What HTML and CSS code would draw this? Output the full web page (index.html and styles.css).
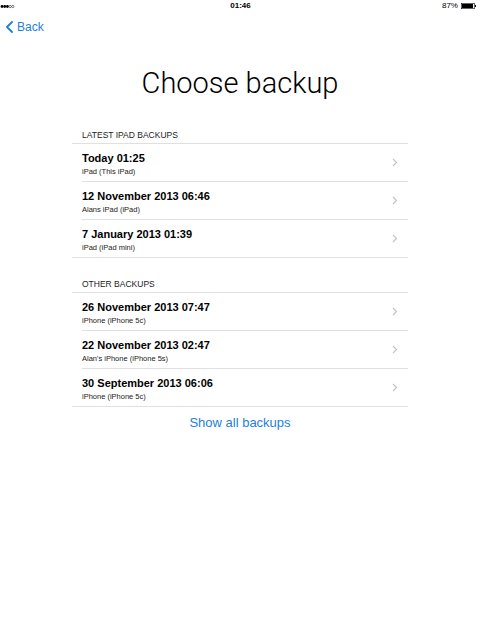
FILE: index.html
```html
<!DOCTYPE html>
<html lang="en">
<head>
    <meta charset="UTF-8">
    <meta name="viewport" content="width=device-width, initial-scale=1.0">
    <title>Choose backup</title>
    <link rel="stylesheet" href="styles.css">
</head>
<body>
    <div class="status-bar">
        <svg class="signal" width="15" height="5" viewBox="0 0 15 5">
            <circle cx="2" cy="2.5" r="1.4" fill="#000"/>
            <circle cx="4.7" cy="2.5" r="1.4" fill="#000"/>
            <circle cx="7.4" cy="2.5" r="1.4" fill="#000"/>
            <circle cx="10.1" cy="2.5" r="1.15" fill="none" stroke="#000" stroke-width="0.5"/>
            <circle cx="12.8" cy="2.5" r="1.15" fill="none" stroke="#000" stroke-width="0.5"/>
        </svg>
        <span class="clock">01:46</span>
        <span class="battery">
            87%
            <svg width="16" height="6" viewBox="0 0 16 6">
                <rect x="0.3" y="0.3" width="13" height="5.4" fill="none" stroke="#000" stroke-width="0.6"/>
                <rect x="1" y="1" width="11" height="4" fill="#000"/>
                <rect x="14" y="2" width="1" height="2" fill="#000"/>
            </svg>
        </span>
    </div>

    <nav class="nav-bar">
        <a class="back-link" href="#">
            <svg width="9" height="12" viewBox="0 0 9 12">
                <path d="M7 1 L2 6 L7 11" fill="none" stroke="#1e7fd9" stroke-width="1.8" stroke-linecap="round" stroke-linejoin="round"/>
            </svg>
            Back
        </a>
    </nav>

    <main class="content">
        <h1 class="title">Choose backup</h1>

        <section class="backup-group">
            <h2 class="group-header">LATEST IPAD BACKUPS</h2>
            <ul class="backup-list">
                <li class="backup-row">
                    <div class="row-inner">
                        <div class="row-text">
                            <div class="row-title">Today 01:25</div>
                            <div class="row-sub">iPad (This iPad)</div>
                        </div>
                        <svg class="chevron" width="6" height="9" viewBox="0 0 6 9"><path d="M1 1 L4.5 4.5 L1 8" fill="none" stroke="#c4c4c8" stroke-width="1.2"/></svg>
                    </div>
                </li>
                <li class="backup-row">
                    <div class="row-inner">
                        <div class="row-text">
                            <div class="row-title">12 November 2013 06:46</div>
                            <div class="row-sub">Alans iPad (iPad)</div>
                        </div>
                        <svg class="chevron" width="6" height="9" viewBox="0 0 6 9"><path d="M1 1 L4.5 4.5 L1 8" fill="none" stroke="#c4c4c8" stroke-width="1.2"/></svg>
                    </div>
                </li>
                <li class="backup-row">
                    <div class="row-inner">
                        <div class="row-text">
                            <div class="row-title">7 January 2013 01:39</div>
                            <div class="row-sub">iPad (iPad mini)</div>
                        </div>
                        <svg class="chevron" width="6" height="9" viewBox="0 0 6 9"><path d="M1 1 L4.5 4.5 L1 8" fill="none" stroke="#c4c4c8" stroke-width="1.2"/></svg>
                    </div>
                </li>
            </ul>
        </section>

        <section class="backup-group">
            <h2 class="group-header">OTHER BACKUPS</h2>
            <ul class="backup-list">
                <li class="backup-row">
                    <div class="row-inner">
                        <div class="row-text">
                            <div class="row-title">26 November 2013 07:47</div>
                            <div class="row-sub">iPhone (iPhone 5c)</div>
                        </div>
                        <svg class="chevron" width="6" height="9" viewBox="0 0 6 9"><path d="M1 1 L4.5 4.5 L1 8" fill="none" stroke="#c4c4c8" stroke-width="1.2"/></svg>
                    </div>
                </li>
                <li class="backup-row">
                    <div class="row-inner">
                        <div class="row-text">
                            <div class="row-title">22 November 2013 02:47</div>
                            <div class="row-sub">Alan's iPhone (iPhone 5s)</div>
                        </div>
                        <svg class="chevron" width="6" height="9" viewBox="0 0 6 9"><path d="M1 1 L4.5 4.5 L1 8" fill="none" stroke="#c4c4c8" stroke-width="1.2"/></svg>
                    </div>
                </li>
                <li class="backup-row">
                    <div class="row-inner">
                        <div class="row-text">
                            <div class="row-title">30 September 2013 06:06</div>
                            <div class="row-sub">iPhone (iPhone 5c)</div>
                        </div>
                        <svg class="chevron" width="6" height="9" viewBox="0 0 6 9"><path d="M1 1 L4.5 4.5 L1 8" fill="none" stroke="#c4c4c8" stroke-width="1.2"/></svg>
                    </div>
                </li>
            </ul>
        </section>

        <a class="show-all" href="#">Show all backups</a>
    </main>
</body>
</html>
```

FILE: styles.css
```css
:root {
    --ios-blue: #1e7fd9;
    --separator: #e0e0e0;
    --text-color: #000000;
}

*, *::before, *::after {
    box-sizing: border-box;
}

body {
    margin: 0;
    background: #ffffff;
    color: var(--text-color);
    font-family: "Liberation Sans", Arial, sans-serif;
}

/* ----- Status bar ----- */
.status-bar {
    height: 12px;
    padding: 0 3px 0 0;
    display: flex;
    justify-content: space-between;
    align-items: center;
    font-size: 8px;
    line-height: 12px;
}

.clock {
    font-weight: 700;
    margin-left: 24px;
}

.battery {
    display: flex;
    align-items: center;
    gap: 3px;
}

/* ----- Nav bar ----- */
.nav-bar {
    height: 30px;
    padding: 7px 0 0 5px;
}

.back-link {
    display: inline-flex;
    align-items: center;
    gap: 3px;
    color: var(--ios-blue);
    text-decoration: none;
    font-size: 12px;
    line-height: 14px;
}

/* ----- Content ----- */
.content {
    width: 336px;
    margin: 0 auto;
    display: flex;
    flex-direction: column;
}

.title {
    margin: 23px 0 28px;
    text-align: center;
    font-family: Roboto, "Liberation Sans", sans-serif;
    font-weight: 300;
    font-size: 29px;
    line-height: 36px;
}

.backup-group + .backup-group {
    margin-top: 20px;
}

.group-header {
    margin: 0;
    padding: 0 0 2px 10px;
    font-size: 8.5px;
    line-height: 12px;
    font-weight: 400;
    color: #222;
}

.backup-list {
    list-style: none;
    margin: 0;
    padding: 0;
    border-top: 1px solid var(--separator);
    border-bottom: 1px solid var(--separator);
}

.backup-row {
    padding-left: 10px;
}

.row-inner {
    height: 38px;
    padding: 8px 10px 0 0;
    display: flex;
    justify-content: space-between;
    align-items: flex-start;
    border-bottom: 1px solid var(--separator);
}

.backup-row:last-child .row-inner {
    height: 37px;
    border-bottom: none;
}

.row-title {
    font-size: 11px;
    line-height: 13px;
    font-weight: 700;
}

.row-sub {
    margin-top: 2px;
    font-size: 7.5px;
    line-height: 10px;
    color: #222;
}

.chevron {
    margin-top: 6px;
}

.show-all {
    margin-top: 8px;
    align-self: center;
    color: var(--ios-blue);
    text-decoration: none;
    font-size: 13px;
    line-height: 16px;
}
```
